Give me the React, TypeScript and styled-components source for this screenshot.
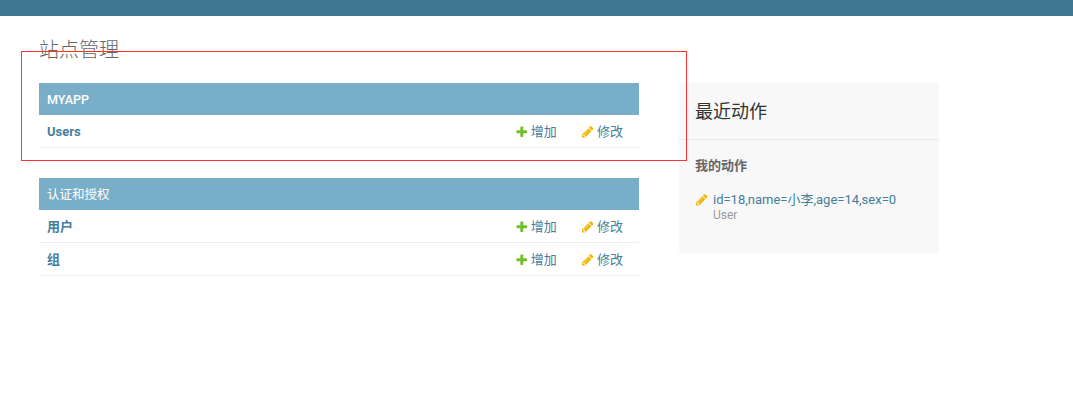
import styled, { createGlobalStyle } from 'styled-components';

const GlobalStyle = createGlobalStyle`
  html, body {
    margin: 0;
    padding: 0;
    background: #fff;
    font-family: Roboto, "Noto Sans CJK SC", "Liberation Sans", sans-serif;
    font-size: 13px;
    line-height: 16px;
    color: #333;
  }
`;

const Page = styled.div`
  position: relative;
  height: 410px;
  overflow: hidden;
`;

const Header = styled.header`
  height: 16px;
  background: #417690;
`;

const Content = styled.main`
  padding: 21px 39px 0;
`;

const Title = styled.h1`
  margin: 0 0 19px;
  font-size: 20px;
  line-height: 27px;
  font-weight: 300;
  color: #666;
`;

const Columns = styled.div`
  display: flex;
  align-items: flex-start;
  gap: 40px;
`;

const Main = styled.div`
  width: 600px;
  display: flex;
  flex-direction: column;
  gap: 30px;
`;

const Module = styled.section``;

const Caption = styled.div<{ $light?: boolean }>`
  box-sizing: border-box;
  height: 32px;
  padding: 2px 8px 0;
  display: flex;
  align-items: center;
  background: #79aec8;
  color: #fff;
  font-size: 12.5px;
  font-weight: ${({ $light }) => ($light ? 400 : 500)};
`;

const Row = styled.div`
  box-sizing: border-box;
  height: 33px;
  border-bottom: 1px solid #eee;
  padding: 1px 16px 0 8px;
  display: flex;
  align-items: center;
`;

const ModelName = styled.a`
  flex: 1;
  color: #447e9b;
  font-weight: 700;
`;

const Action = styled.a`
  display: flex;
  align-items: center;
  gap: 2.6px;
  color: #447e9b;
  margin-left: 24px;
`;

const Icon = styled.svg`
  width: 13.6px;
  height: 13.6px;
  flex: none;
`;

const Sidebar = styled.aside`
  width: 260px;
  height: 170px;
  background: #f8f8f8;
`;

const SidebarTitle = styled.h2`
  margin: 0;
  height: 57px;
  padding: 2px 16px 0;
  display: flex;
  align-items: center;
  box-sizing: border-box;
  border-bottom: 1px solid #eaeaea;
  font-size: 18px;
  font-weight: 400;
  color: #333;
`;

const SidebarBody = styled.div`
  padding: 17px 16px 0;
`;

const SidebarSubtitle = styled.h3`
  margin: 0 0 18px;
  font-size: 13px;
  line-height: 17px;
  font-weight: 700;
  color: #666;
`;

const Recent = styled.div`
  display: flex;
  gap: 4.4px;
`;

const RecentIcon = styled.div`
  padding-top: 1px;
`;

const RecentLink = styled.a`
  display: block;
  color: #447e9b;
`;

const RecentType = styled.span`
  display: block;
  color: #999;
  font-size: 12px;
  line-height: 14px;
`;

const Highlight = styled.div`
  position: absolute;
  left: 21px;
  top: 51px;
  width: 664px;
  height: 108px;
  border: 1px solid #f33;
  pointer-events: none;
`;

const PLUS =
  'M1600 796v192q0 40-28 68t-68 28h-416v416q0 40-28 68t-68 28h-192q-40 0-68-28t-28-68v-416h-416q-40 0-68-28t-28-68v-192q0-40 28-68t68-28h416v-416q0-40 28-68t68-28h192q40 0 68 28t28 68v416h416q40 0 68 28t28 68z';
const PENCIL =
  'M491 1536l91-91-235-235-91 91v107h128v128h107zm523-928q0-22-22-22-10 0-17 7l-542 542q-7 7-7 17 0 22 22 22 10 0 17-7l542-542q7-7 7-17zm-54-192l416 416-832 832h-416v-416zm683 96q0 53-37 90l-166 166-416-416 166-165q36-38 90-38 53 0 91 38l235 234q37 39 37 91z';

const PlusIcon = () => (
  <Icon viewBox="0 0 1792 1792">
    <path fill="#70bf2b" d={PLUS} />
  </Icon>
);

const PencilIcon = () => (
  <Icon viewBox="0 0 1792 1792">
    <path fill="#efb80b" d={PENCIL} />
  </Icon>
);

const ModelRow = ({ name }: { name: string }) => (
  <Row>
    <ModelName>{name}</ModelName>
    <Action>
      <PlusIcon />
      增加
    </Action>
    <Action>
      <PencilIcon />
      修改
    </Action>
  </Row>
);

const App = () => (
  <Page>
    <GlobalStyle />
    <Header />
    <Content>
      <Title>站点管理</Title>
      <Columns>
        <Main>
          <Module>
            <Caption>MYAPP</Caption>
            <ModelRow name="Users" />
          </Module>
          <Module>
            <Caption $light>认证和授权</Caption>
            <ModelRow name="用户" />
            <ModelRow name="组" />
          </Module>
        </Main>
        <Sidebar>
          <SidebarTitle>最近动作</SidebarTitle>
          <SidebarBody>
            <SidebarSubtitle>我的动作</SidebarSubtitle>
            <Recent>
              <RecentIcon>
                <PencilIcon />
              </RecentIcon>
              <div>
                <RecentLink>id=18,name=小李,age=14,sex=0</RecentLink>
                <RecentType>User</RecentType>
              </div>
            </Recent>
          </SidebarBody>
        </Sidebar>
      </Columns>
    </Content>
    <Highlight />
  </Page>
);

export default App;
